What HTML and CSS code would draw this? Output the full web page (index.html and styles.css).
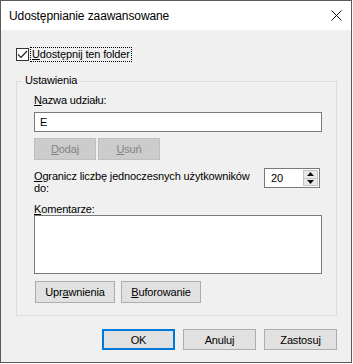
FILE: index.html
```html
<!DOCTYPE html>
<html lang="pl">
<head>
<meta charset="utf-8">
<title>Udostępnianie zaawansowane</title>
<link rel="stylesheet" href="styles.css">
</head>
<body>
<div class="window">
  <div class="titlebar">
    <span class="title">Udostępnianie zaawansowane</span>
    <svg class="close" width="11" height="11" viewBox="0 0 11 11"><path d="M0.5 0.5 L10.5 10.5 M10.5 0.5 L0.5 10.5" stroke="#111" stroke-width="1" fill="none"/></svg>
  </div>
  <div class="content">
    <div class="share-row">
      <span class="checkbox"><svg width="11" height="11" viewBox="0 0 11 11"><path d="M1 5.5 L4 8.5 L10 2" stroke="#222" stroke-width="1.2" fill="none"/></svg></span>
      <span class="focus-label"><u>U</u>dostępnij ten folder</span>
    </div>
    <div class="group">
      <span class="legend">Ustawienia</span>
      <div class="lbl"><u>N</u>azwa udziału:</div>
      <div class="textbox">E</div>
      <div class="btn-row">
        <span class="btn disabled"><u>D</u>odaj</span>
        <span class="btn disabled"><u>U</u>suń</span>
      </div>
      <div class="limit-row">
        <div class="lbl limit-text"><u>O</u>granicz liczbę jednoczesnych użytkowników<br>do:</div>
        <div class="spin">
          <span class="spin-value">20</span>
          <div class="spin-btns">
            <span class="spin-btn"><svg width="7" height="4" viewBox="0 0 7 4"><path d="M0 4 L3.5 0 L7 4 Z" fill="#111"/></svg></span>
            <span class="spin-btn"><svg width="7" height="4" viewBox="0 0 7 4"><path d="M0 0 L3.5 4 L7 0 Z" fill="#111"/></svg></span>
          </div>
        </div>
      </div>
      <div class="lbl comment-lbl"><u>K</u>omentarze:</div>
      <div class="textarea"></div>
      <div class="btn-row2">
        <span class="btn wide">Upr<u>a</u>wnienia</span>
        <span class="btn wide"><u>B</u>uforowanie</span>
      </div>
    </div>
    <div class="footer">
      <span class="btn dlg default">OK</span>
      <span class="btn dlg">Anuluj</span>
      <span class="btn dlg">Zastosuj</span>
    </div>
  </div>
</div>
</body>
</html>
```
FILE: styles.css
```css
* { box-sizing: border-box; }
html, body { margin: 0; padding: 0; background: #ffffff; }
body {
  font-family: "Liberation Sans", Arial, sans-serif;
  font-size: 11px;
  letter-spacing: -0.15px;
  color: #000;
}
.window {
  width: 352px;
  height: 363px;
  border: 1px solid #5a5a5a;
  display: flex;
  flex-direction: column;
  background: #f0f0f0;
}
.titlebar {
  height: 29px;
  background: #ffffff;
  display: flex;
  align-items: center;
  justify-content: space-between;
  padding: 0 8px 0 8px;
  flex: none;
}
.title {
  font-size: 12px;
  letter-spacing: -0.1px;
  padding-top: 1px;
}
.close { display: block; margin-right: 1px; }
.content {
  flex: 1;
  background: #f0f0f0;
  padding: 17px 14px 0 15px;
}
.share-row {
  display: flex;
  align-items: center;
  height: 15px;
}
.checkbox {
  width: 13px;
  height: 13px;
  border: 1px solid #333;
  background: #fff;
  display: flex;
  align-items: center;
  justify-content: center;
}
.checkbox svg { display: block; }
.focus-label {
  margin-left: 1px;
  border: 1px dotted #000;
  height: 15px;
  line-height: 13px;
  padding: 0 1px 0 1px;
}
.group {
  position: relative;
  margin-top: 19px;
  width: 321px;
  border: 1px solid #dcdcdc;
  padding: 12px 14px 12px 17px;
}
.legend {
  position: absolute;
  top: -8px;
  left: 6px;
  background: #f0f0f0;
  padding: 0 2px;
  line-height: 13px;
}
.lbl { line-height: 12px; }
.textbox {
  margin-top: 6px;
  height: 20px;
  border: 1px solid #7a7a7a;
  background: #fff;
  padding-left: 5px;
  line-height: 18px;
}
.btn-row {
  display: flex;
  gap: 2px;
  margin-top: 6px;
}
.btn {
  display: flex;
  align-items: center;
  justify-content: center;
  height: 22px;
  background: #e1e1e1;
  border: 1px solid #adadad;
}
.btn-row .btn { width: 62px; }
.btn.disabled {
  background: #cccccc;
  border-color: #bfbfbf;
  color: #838383;
}
.limit-row {
  display: flex;
  justify-content: space-between;
  align-items: flex-start;
  margin-top: 8px;
  padding-right: 2px;
}
.limit-text { padding-top: 2px; }
.spin {
  width: 56px;
  height: 20px;
  border: 1px solid #7a7a7a;
  background: #fff;
  display: flex;
  justify-content: space-between;
}
.spin-value {
  padding-left: 6px;
  line-height: 18px;
}
.spin-btns {
  display: flex;
  flex-direction: column;
  width: 16px;
  padding: 1px 1px 1px 0;
}
.spin-btn {
  flex: 1;
  background: #e9e9e9;
  border: 1px solid #c4c4c4;
  display: flex;
  align-items: center;
  justify-content: center;
}
.spin-btn + .spin-btn { border-top: none; }
.spin-btn svg { display: block; }
.comment-lbl { margin-top: 9px; }
.textarea {
  height: 59px;
  border: 1px solid #7a7a7a;
  background: #fff;
}
.btn-row2 {
  display: flex;
  gap: 6px;
  margin-top: 7px;
  padding-left: 1px;
}
.btn.wide { width: 80px; }
.footer {
  display: flex;
  justify-content: flex-end;
  gap: 8px;
  margin-top: 13px;
}
.btn.dlg { width: 73px; height: 21px; }
.btn.default { border: 2px solid #0078d7; }
u { text-decoration: underline; text-underline-offset: 1px; }
```
